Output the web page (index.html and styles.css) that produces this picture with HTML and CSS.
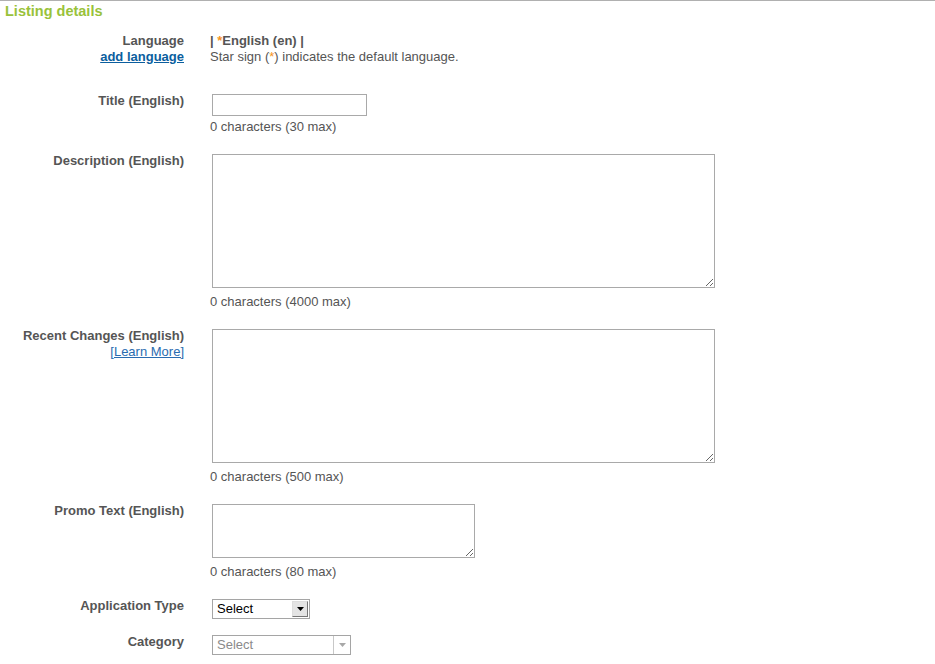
FILE: index.html
```html
<!DOCTYPE html>
<html>
<head>
<meta charset="utf-8">
<link rel="stylesheet" href="styles.css">
</head>
<body>
<div class="page">
  <h2 class="section-title">Listing details</h2>

  <div class="row row-lang">
    <div class="label">Language<br><a class="add-lang" href="#">add language</a></div>
    <div class="field">
      <div class="lang-list">| <span class="star">*</span>English (en) |</div>
      <div class="hint">Star sign (<span class="star">*</span>) indicates the default language.</div>
    </div>
  </div>

  <div class="row">
    <div class="label">Title (English)</div>
    <div class="field">
      <input class="text-input" type="text">
      <div class="count count-input">0 characters (30 max)</div>
    </div>
  </div>

  <div class="row">
    <div class="label">Description (English)</div>
    <div class="field">
      <textarea class="area area-big"></textarea>
      <div class="count">0 characters (4000 max)</div>
    </div>
  </div>

  <div class="row">
    <div class="label">Recent Changes (English)<br><a class="learn" href="#">[Learn More]</a></div>
    <div class="field">
      <textarea class="area area-big"></textarea>
      <div class="count">0 characters (500 max)</div>
    </div>
  </div>

  <div class="row">
    <div class="label">Promo Text (English)</div>
    <div class="field">
      <textarea class="area area-small"></textarea>
      <div class="count">0 characters (80 max)</div>
    </div>
  </div>

  <div class="row row-select">
    <div class="label">Application Type</div>
    <div class="field">
      <div class="fake-select type-select">
        <span class="sel-text">Select</span>
        <span class="sel-btn"><svg width="7" height="4" viewBox="0 0 7 4"><path d="M0 0h7L3.5 4z" fill="#000"/></svg></span>
      </div>
    </div>
  </div>

  <div class="row row-select">
    <div class="label">Category</div>
    <div class="field">
      <div class="fake-select cat-select disabled">
        <span class="sel-text">Select</span>
        <span class="sel-btn"><svg width="7" height="4" viewBox="0 0 7 4"><path d="M0 0h7L3.5 4z" fill="#a8a8a8"/></svg></span>
      </div>
    </div>
  </div>
</div>
</body>
</html>
```
FILE: styles.css
```css
html, body {
  margin: 0;
  padding: 0;
  background: #fff;
}
body {
  font-family: "Liberation Sans", Arial, sans-serif;
  font-size: 13px;
  color: #555;
}
.page {
  border-top: 1px solid #b0b0b0;
}
.section-title {
  margin: 0;
  padding: 2px 0 0 5px;
  height: 32px;
  box-sizing: border-box;
  font-size: 14.5px;
  line-height: 16px;
  font-weight: bold;
  color: #99c23a;
}
.row {
  display: flex;
  padding-bottom: 18px;
}
.row-lang {
  padding-bottom: 28px;
}
.row-select {
  padding-bottom: 15px;
}
.label {
  width: 184px;
  flex: none;
  text-align: right;
  font-size: 13px;
  line-height: 16px;
  font-weight: bold;
  color: #555;
}
.field {
  margin-left: 26px;
  line-height: 16px;
}
.add-lang {
  color: #0b5e9e;
  text-decoration: underline;
}
.learn {
  font-size: 13px;
  font-weight: normal;
  color: #2a6cb0;
  text-decoration: underline;
}
.lang-list {
  font-size: 13px;
  font-weight: bold;
  color: #555;
}
.hint {
  font-size: 13px;
  color: #555;
}
.star {
  color: #f7941d;
}
.text-input {
  display: block;
  margin: 1px 0 0 2px;
  width: 155px;
  height: 22px;
  box-sizing: border-box;
  border: 1px solid #a9a9a9;
  padding: 0;
}
.area {
  display: block;
  margin: 1px 0 0 2px;
  box-sizing: border-box;
  border: 1px solid #a9a9a9;
  padding: 0;
}
.area-big {
  width: 503px;
  height: 134px;
}
.area-small {
  width: 263px;
  height: 54px;
}
.count {
  margin-top: 6px;
  font-size: 13px;
  color: #555;
}
.count-input {
  margin-top: 3px;
}
.fake-select {
  display: flex;
  align-items: center;
  margin: 1px 0 0 2px;
  height: 20px;
  box-sizing: border-box;
  border: 1px solid #a5a5a5;
  font-size: 13px;
  background: #fff;
}
.type-select {
  width: 98px;
}
.cat-select {
  width: 139px;
}
.sel-text {
  flex: 1;
  padding-left: 4px;
  color: #000;
}
.disabled .sel-text {
  color: #8a8a8a;
}
.sel-btn {
  display: flex;
  align-items: center;
  justify-content: center;
  width: 16px;
  height: 16px;
  margin-right: 1px;
  box-sizing: border-box;
  border: 1px solid #777;
  border-top-color: #ddd;
  border-left-color: #ddd;
  background: #e4e4e4;
}
.disabled .sel-btn {
  height: 18px;
  margin-right: 0;
  width: 17px;
  border: none;
  border-left: 1px solid #c8c8c8;
  background: #fff;
}
```
